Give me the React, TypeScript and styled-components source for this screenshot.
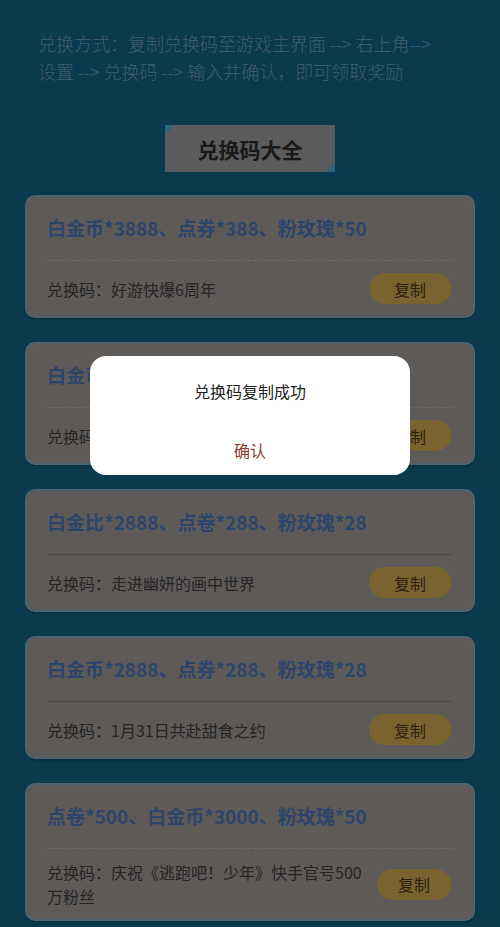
import React from 'react';
import styled, { createGlobalStyle } from 'styled-components';

const GlobalStyle = createGlobalStyle`
  html, body {
    margin: 0;
    padding: 0;
    background: #17739b;
  }
  body {
    font-family: "Noto Sans CJK SC", "Noto Sans", sans-serif;
  }
`;

interface ICodeItem {
  reward: string;
  code: string;
  separator: 'dashed' | 'solid';
}

const CODES: ICodeItem[] = [
  { reward: '白金币*3888、点券*388、粉玫瑰*50', code: '好游快爆6周年', separator: 'dashed' },
  { reward: '白金币*3888、点券*388、粉玫瑰*50', code: '好游快爆6周年', separator: 'dashed' },
  { reward: '白金比*2888、点卷*288、粉玫瑰*28', code: '走进幽妍的画中世界', separator: 'solid' },
  { reward: '白金币*2888、点券*288、粉玫瑰*28', code: '1月31日共赴甜食之约', separator: 'solid' },
  { reward: '点卷*500、白金币*3000、粉玫瑰*50', code: '庆祝《逃跑吧！少年》快手官号500万粉丝', separator: 'dashed' },
];

const Page = styled.div`
  padding: 29px 25px 10px;
  background: #17739b;
  min-height: 927px;
  box-sizing: border-box;
`;

const Instruction = styled.p`
  margin: 0;
  padding: 0 32px 0 13px;
  font-size: 18px;
  line-height: 28px;
  font-weight: 300;
  color: #7bb8d4;
`;

const HeaderWrap = styled.div`
  display: flex;
  justify-content: center;
  margin: 40px 0 23px;
`;

const HeaderBox = styled.div`
  position: relative;
  width: 170px;
  height: 47px;
  display: flex;
  align-items: center;
  justify-content: center;
  background: #b6b6b6;
  color: #333;
  font-size: 21px;
  font-weight: 700;

  &::before,
  &::after {
    content: '';
    position: absolute;
    width: 0;
    height: 0;
  }
  &::before {
    top: 0;
    left: 0;
    border-top: 10px solid #5cc8f0;
    border-right: 10px solid transparent;
  }
  &::after {
    bottom: 0;
    right: 0;
    border-bottom: 10px solid #5cc8f0;
    border-left: 10px solid transparent;
  }
`;

const List = styled.div`
  display: flex;
  flex-direction: column;
  gap: 24px;
`;

const Card = styled.div`
  background: #bbb4b1;
  border: 2px solid #98c9e0;
  border-radius: 10px;
  padding: 0 21px 0 20px;
  box-shadow: 0 2px 2px rgba(0, 0, 0, 0.15);
`;

const Reward = styled.div<{ $sep: 'dashed' | 'solid' }>`
  padding: 17px 0 18px;
  font-size: 19px;
  line-height: 28px;
  font-weight: 700;
  color: #5a8ad6;
  border-bottom: 1px ${(p) => p.$sep} ${(p) => (p.$sep === 'dashed' ? '#d8d2ce' : '#9a9694')};
`;

const CodeRow = styled.div`
  display: flex;
  align-items: center;
  justify-content: space-between;
  gap: 4px;
  padding: 11px 0;
  min-height: 33px;
`;

const CodeText = styled.div`
  font-size: 16px;
  line-height: 24px;
  color: #4a4a4a;
  padding-right: 4px;
`;

const CopyButton = styled.button`
  flex: 0 1 82px;
  min-width: 72px;
  height: 31px;
  margin-right: 1px;
  border: none;
  border-radius: 16px;
  background: #f2c65e;
  color: #564222;
  font-family: inherit;
  font-size: 16px;
  cursor: pointer;
`;

const Overlay = styled.div`
  position: fixed;
  inset: 0;
  background: rgba(0, 0, 0, 0.5);
`;

const Dialog = styled.div`
  position: fixed;
  top: 356px;
  left: 90px;
  width: 320px;
  height: 119px;
  background: #fff;
  border-radius: 16px;
  display: flex;
  flex-direction: column;
  align-items: center;
`;

const DialogText = styled.div`
  margin-top: 23px;
  font-size: 16px;
  line-height: 24px;
  color: #222;
`;

const DialogConfirm = styled.button`
  margin-top: 35px;
  border: none;
  background: none;
  padding: 0;
  font-family: inherit;
  font-size: 16px;
  line-height: 24px;
  color: #8a3c2e;
`;

export default function App() {
  return (
    <>
      <GlobalStyle />
      <Page>
        <Instruction>兑换方式：复制兑换码至游戏主界面 --&gt; 右上角--&gt;设置 --&gt; 兑换码 --&gt; 输入并确认，即可领取奖励</Instruction>
        <HeaderWrap>
          <HeaderBox>兑换码大全</HeaderBox>
        </HeaderWrap>
        <List>
          {CODES.map((item, inx) => (
            <Card key={inx}>
              <Reward $sep={item.separator}>{item.reward}</Reward>
              <CodeRow>
                <CodeText>兑换码：{item.code}</CodeText>
                <CopyButton>复制</CopyButton>
              </CodeRow>
            </Card>
          ))}
        </List>
      </Page>
      <Overlay />
      <Dialog>
        <DialogText>兑换码复制成功</DialogText>
        <DialogConfirm>确认</DialogConfirm>
      </Dialog>
    </>
  );
}
